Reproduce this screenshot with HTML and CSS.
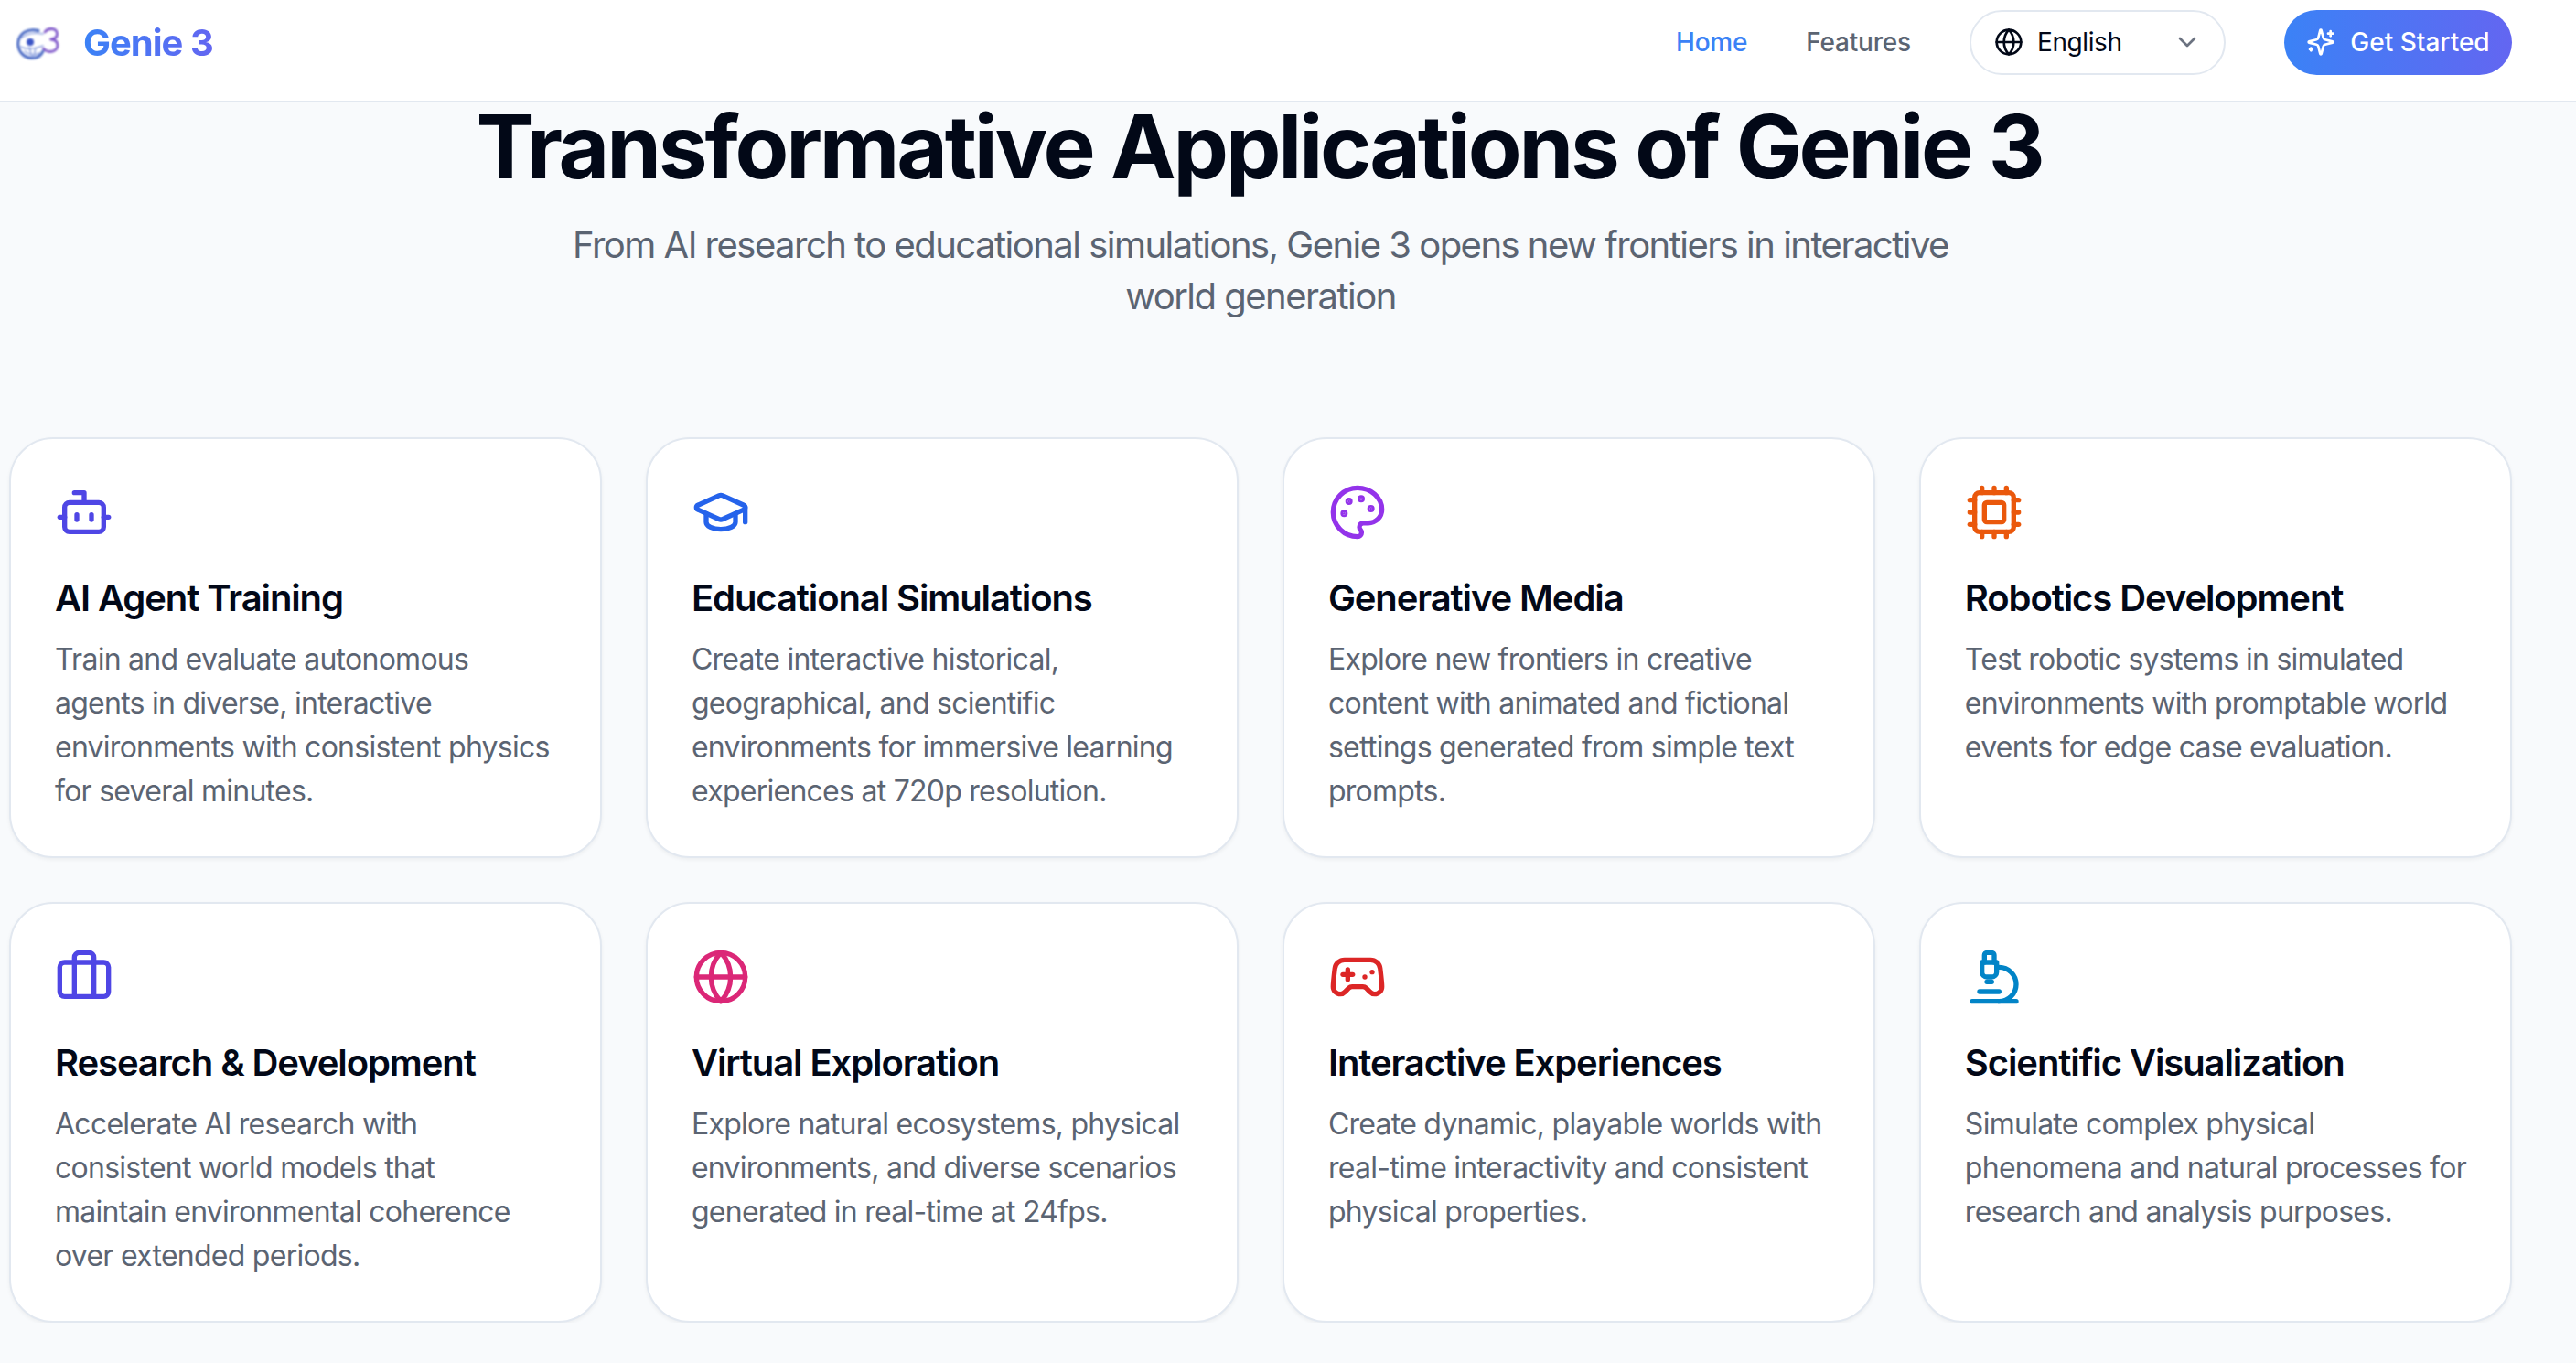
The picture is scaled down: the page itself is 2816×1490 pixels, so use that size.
FILE: index.html
```html
<!DOCTYPE html>
<html lang="en">
<head>
    <meta charset="UTF-8">
    <meta name="viewport" content="width=device-width, initial-scale=1.0">
    <title>Genie 3 - Applications</title>
    <link rel="stylesheet" href="styles.css">
</head>
<body>
    <div class="header">
        <div class="brand">
            <svg class="logo" viewBox="0 0 47 35" fill="none">
                <path d="M24 3.500C13 .5 2.500 6 1.800 17c-.6 9 6.500 16.500 15.200 16.500 5.500 0 10-2.500 12-7.500" stroke="#4a6ac4" stroke-width="3" stroke-linecap="round"/>
                <path d="M5 12c5-5 13-7 24-5M4 21c7 3 16 3 25-1M9 26c4 4 11 5 16 2M14 22l3 10M21 22l-2 10" stroke="#93a6e0" stroke-width="1.600" stroke-linecap="round"/>
                <circle cx="15" cy="16" r="4" fill="#3a54c6"/>
                <path d="M31 5c2-2.500 4.500-3.500 7-3.500 4 0 6.500 2.500 6.500 5.500s-2.500 5.500-7 6c5 .5 7.500 3 7.500 6.500 0 4-3.500 7-8 7-3 0-5.500-1-7.500-3.500" stroke="#8058ca" stroke-width="2.800" stroke-linecap="round" stroke-linejoin="round"/>
            </svg>
            <span class="brand-name">Genie 3</span>
        </div>
        <div class="nav">
            <a class="nav-link active">Home</a>
            <a class="nav-link">Features</a>
            <div class="lang">
                <svg class="icon-sm" viewBox="0 0 24 24"><circle cx="12" cy="12" r="10"/><path d="M12 2a14.500 14.500 0 0 0 0 20 14.500 14.500 0 0 0 0-20"/><path d="M2 12h20"/></svg>
                <span class="lang-name">English</span>
                <svg class="icon-sm chevron" viewBox="0 0 24 24"><path d="m6 9 6 6 6-6"/></svg>
            </div>
            <a class="btn">
                <svg class="icon-sm" viewBox="0 0 24 24"><path d="M9.937 15.500A2 2 0 0 0 8.500 14.063l-6.135-1.582a.5.5 0 0 1 0-.962L8.500 9.936A2 2 0 0 0 9.937 8.500l1.582-6.135a.5.5 0 0 1 .963 0L14.063 8.500A2 2 0 0 0 15.500 9.937l6.135 1.581a.5.5 0 0 1 0 .964L15.500 14.063a2 2 0 0 0-1.437 1.437l-1.582 6.135a.5.5 0 0 1-.963 0z"/><path d="M20 3v4"/><path d="M22 5h-4"/><path d="M4 17v2"/><path d="M5 18H3"/></svg>
                Get Started
            </a>
        </div>
    </div>

    <div class="content">
        <div class="intro">
            <h1>Transformative Applications of Genie 3</h1>
            <p>From AI research to educational simulations, Genie 3 opens new frontiers in interactive world generation</p>
        </div>

        <div class="cards">
            <div class="card">
                <svg class="icon indigo" viewBox="0 0 24 24"><path d="M12 8V4H8"/><rect width="16" height="12" x="4" y="8" rx="2"/><path d="M2 14h2"/><path d="M20 14h2"/><path d="M15 13v2"/><path d="M9 13v2"/></svg>
                <h3>AI Agent Training</h3>
                <p>Train and evaluate autonomous<br>agents in diverse, interactive<br>environments with consistent physics<br>for several minutes.</p>
            </div>
            <div class="card">
                <svg class="icon blue" viewBox="0 0 24 24"><path d="M21.420 10.922a1 1 0 0 0-.019-1.838L12.830 5.180a2 2 0 0 0-1.660 0L2.600 9.080a1 1 0 0 0 0 1.832l8.570 3.908a2 2 0 0 0 1.660 0z"/><path d="M22 10v6"/><path d="M6 12.500V16a6 3 0 0 0 12 0v-3.500"/></svg>
                <h3>Educational Simulations</h3>
                <p>Create interactive historical,<br>geographical, and scientific<br>environments for immersive learning<br>experiences at 720p resolution.</p>
            </div>
            <div class="card">
                <svg class="icon purple" viewBox="0 0 24 24"><circle class="dot" cx="13.500" cy="6.500" r=".5"/><circle class="dot" cx="17.500" cy="10.500" r=".5"/><circle class="dot" cx="8.500" cy="7.500" r=".5"/><circle class="dot" cx="6.500" cy="12.500" r=".5"/><path d="M12 2C6.500 2 2 6.500 2 12s4.500 10 10 10c.926 0 1.648-.746 1.648-1.688 0-.437-.18-.835-.437-1.125-.29-.289-.438-.652-.438-1.125a1.640 1.640 0 0 1 1.668-1.668h1.996c3.051 0 5.555-2.503 5.555-5.554C21.965 6.012 17.461 2 12 2z"/></svg>
                <h3>Generative Media</h3>
                <p>Explore new frontiers in creative<br>content with animated and fictional<br>settings generated from simple text<br>prompts.</p>
            </div>
            <div class="card">
                <svg class="icon orange" viewBox="0 0 24 24"><path d="M12 20v2"/><path d="M12 2v2"/><path d="M17 20v2"/><path d="M17 2v2"/><path d="M2 12h2"/><path d="M2 17h2"/><path d="M2 7h2"/><path d="M20 12h2"/><path d="M20 17h2"/><path d="M20 7h2"/><path d="M7 20v2"/><path d="M7 2v2"/><rect x="4" y="4" width="16" height="16" rx="2"/><rect x="8" y="8" width="8" height="8" rx="1"/></svg>
                <h3>Robotics Development</h3>
                <p>Test robotic systems in simulated<br>environments with promptable world<br>events for edge case evaluation.</p>
            </div>
            <div class="card">
                <svg class="icon indigo" viewBox="0 0 24 24"><path d="M16 20V4a2 2 0 0 0-2-2h-4a2 2 0 0 0-2 2v16"/><rect width="20" height="14" x="2" y="6" rx="2"/></svg>
                <h3>Research &amp; Development</h3>
                <p>Accelerate AI research with<br>consistent world models that<br>maintain environmental coherence<br>over extended periods.</p>
            </div>
            <div class="card">
                <svg class="icon pink" viewBox="0 0 24 24"><circle cx="12" cy="12" r="10"/><path d="M12 2a14.500 14.500 0 0 0 0 20 14.500 14.500 0 0 0 0-20"/><path d="M2 12h20"/></svg>
                <h3>Virtual Exploration</h3>
                <p>Explore natural ecosystems, physical<br>environments, and diverse scenarios<br>generated in real-time at 24fps.</p>
            </div>
            <div class="card">
                <svg class="icon red" viewBox="0 0 24 24"><path d="M6 11h4"/><path d="M8 9v4"/><path d="M15 12h.01"/><path d="M18 10h.01"/><path d="M17.320 5H6.680a4 4 0 0 0-3.978 3.590c-.006.052-.01.101-.017.152C2.604 9.416 2 14.456 2 16a3 3 0 0 0 3 3c1 0 1.500-.5 2-1l1.414-1.414A2 2 0 0 1 9.828 16h4.344a2 2 0 0 1 1.414.586L17 18c.5.5 1 1 2 1a3 3 0 0 0 3-3c0-1.545-.604-6.584-.685-7.258-.007-.05-.011-.1-.017-.151A4 4 0 0 0 17.320 5z"/></svg>
                <h3>Interactive Experiences</h3>
                <p>Create dynamic, playable worlds with<br>real-time interactivity and consistent<br>physical properties.</p>
            </div>
            <div class="card">
                <svg class="icon sky" viewBox="0 0 24 24"><path d="M6 18h8"/><path d="M3 22h18"/><path d="M14 22a7 7 0 1 0 0-14h-1"/><path d="M9 14h2"/><path d="M9 12a2 2 0 0 1-2-2V6h6v4a2 2 0 0 1-2 2Z"/><path d="M12 6V3a1 1 0 0 0-1-1H9a1 1 0 0 0-1 1v3"/></svg>
                <h3>Scientific Visualization</h3>
                <p>Simulate complex physical<br>phenomena and natural processes for<br>research and analysis purposes.</p>
            </div>
        </div>
    </div>
</body>
</html>
```

FILE: styles.css
```css
* {
    margin: 0;
    padding: 0;
    box-sizing: border-box;
}

body {
    font-family: Inter, "Liberation Sans", sans-serif;
    background: #f8fafc;
    color: #020817;
    overflow: hidden;
}

svg {
    fill: none;
    stroke: currentColor;
    stroke-width: 2;
    stroke-linecap: round;
    stroke-linejoin: round;
    flex-shrink: 0;
}

.header {
    height: 112px;
    background: #fff;
    border-bottom: 2px solid #e2e8f0;
    display: flex;
    align-items: center;
    justify-content: space-between;
    padding: 0 70px 18px 18px;
}

.brand {
    display: flex;
    align-items: center;
    gap: 26px;
}

.logo {
    width: 47px;
    height: 35px;
    margin-top: 2px;
    stroke: none;
    filter: blur(0.8px);
}

.brand-name {
    font-size: 40px;
    font-weight: 700;
    letter-spacing: -1px;
    background: linear-gradient(90deg, #3b82f6, #6366f1);
    -webkit-background-clip: text;
    background-clip: text;
    color: transparent;
}

.nav {
    display: flex;
    align-items: center;
    gap: 64px;
    font-size: 28px;
}

.nav-link {
    color: #5b6472;
    font-weight: 500;
    letter-spacing: -0.2px;
}

.nav-link.active {
    color: #3b82f6;
}

.icon-sm {
    width: 32px;
    height: 32px;
}

.lang {
    width: 280px;
    height: 71px;
    background: #fff;
    border: 2px solid #e2e8f0;
    border-radius: 36px;
    display: flex;
    align-items: center;
    padding: 0 24px 0 25px;
    gap: 15px;
}

.lang-name {
    flex: 1;
    letter-spacing: -0.4px;
}

.chevron {
    color: #6b7280;
}

.btn {
    width: 249px;
    height: 71px;
    border-radius: 36px;
    background: linear-gradient(90deg, #3b82f6, #6366f1);
    color: #fff;
    font-weight: 500;
    display: flex;
    align-items: center;
    justify-content: center;
    gap: 16px;
}

.content {
    width: 2736px;
    margin-left: 10px;
}

.intro {
    text-align: center;
    margin-bottom: 126px;
}

.intro h1 {
    font-size: 96px;
    line-height: 96px;
    font-weight: 700;
    margin-bottom: 32px;
    padding-right: 3px;
    letter-spacing: -3.15px;
}

.intro p {
    font-size: 40px;
    line-height: 56px;
    letter-spacing: -1.52px;
    color: #5b6472;
    max-width: 1536px;
    margin: 0 auto;
}

.cards {
    display: grid;
    grid-template-columns: repeat(4, 1fr);
    gap: 48px;
}

.card {
    height: 460px;
    background: #fff;
    border: 2px solid #e2e8f0;
    border-radius: 48px;
    padding: 48px;
    box-shadow: 0 2px 4px rgba(0,0,0,0.05);
}

.card h3 {
    font-size: 40px;
    line-height: 56px;
    font-weight: 600;
    letter-spacing: -1.1px;
    margin-bottom: 15px;
}

.card p {
    font-size: 32px;
    line-height: 48px;
    letter-spacing: -0.74px;
    color: #5b6472;
    white-space: nowrap;
}

.icon {
    display: block;
    width: 64px;
    height: 64px;
    margin-bottom: 34px;
}

.dot {
    fill: currentColor;
}

.indigo { color: #4f46e5; }
.blue { color: #2563eb; }
.purple { color: #9333ea; }
.orange { color: #ea580c; }
.pink { color: #db2777; }
.red { color: #dc2626; }
.sky { color: #0284c7; }
```
